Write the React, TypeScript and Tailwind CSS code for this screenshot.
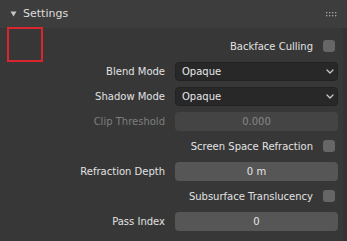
import React from "react";

// Blender-style "Settings" material panel
const FONT = { fontFamily: '"DejaVu Sans", "Liberation Sans", sans-serif' };

function Chevron() {
  return (
    <svg width="8" height="5" viewBox="0 0 8 5" className="shrink-0">
      <path d="M1 1l3 3 3-3" fill="none" stroke="#c8c8c8" strokeWidth="1.3" strokeLinecap="round" strokeLinejoin="round" />
    </svg>
  );
}

function Dropdown({ value }: { value: string }) {
  return (
    <div className="h-[19px] rounded-[4px] bg-[#282828] border border-[#222] flex items-center justify-between pl-[6px] pr-[3px] text-[#e6e6e6]">
      <span>{value}</span>
      <Chevron />
    </div>
  );
}

function NumField({ value, disabled }: { value: string; disabled?: boolean }) {
  return (
    <div
      className={`h-[19px] rounded-[4px] flex items-center justify-center ${
        disabled ? "bg-[#444444] text-[#868686]" : "bg-[#565656] text-[#e6e6e6]"
      }`}
    >
      {value}
    </div>
  );
}

function CheckRow({ label }: { label: string }) {
  return (
    <>
      <div />
      <div className="flex items-center justify-end gap-[10px] pr-[3px] text-[#e2e2e2]">
        <span>{label}</span>
        <span className="w-[12px] h-[12px] rounded-[3px] bg-[#666666]" />
      </div>
    </>
  );
}

function Label({ text, dim }: { text: string; dim?: boolean }) {
  return <div className={`text-right ${dim ? "text-[#7e7e7e]" : "text-[#e2e2e2]"}`}>{text}</div>;
}

export default function App() {
  return (
    <div className="w-[347px] h-[241px] bg-[#373737] overflow-hidden relative text-[10px]" style={FONT}>
      {/* header */}
      <div className="h-[28px] bg-[#3d3d3d] flex items-center pl-[10px] pr-[9px]">
        <svg width="7" height="6" viewBox="0 0 7 6" className="mr-[6px]">
          <path d="M0.5 0.5h6L3.5 5.5z" fill="#c4c4c4" />
        </svg>
        <span className="text-[11px] text-[#dedede]">Settings</span>
        <svg width="12" height="5" viewBox="0 0 12 5" className="ml-auto mt-[1px]">
          {[0, 3, 6, 9].map((x) =>
            [0, 3].map((y) => (
              <g key={`${x}-${y}`}>
                <rect x={x + 0.5} y={y + 0.5} width="1.5" height="1.5" fill="#1e1e1e" />
                <rect x={x} y={y} width="1.5" height="1.5" fill="#a0a0a0" />
              </g>
            ))
          )}
        </svg>
      </div>

      {/* rows */}
      <div className="grid grid-cols-[165px_163px] gap-x-[10px] gap-y-[5px] auto-rows-[20px] items-center pt-[8px]">
        <CheckRow label="Backface Culling" />
        <Label text="Blend Mode" />
        <Dropdown value="Opaque" />
        <Label text="Shadow Mode" />
        <Dropdown value="Opaque" />
        <Label text="Clip Threshold" dim />
        <NumField value="0.000" disabled />
        <CheckRow label="Screen Space Refraction" />
        <Label text="Refraction Depth" />
        <NumField value="0 m" />
        <CheckRow label="Subsurface Translucency" />
        <Label text="Pass Index" />
        <NumField value="0" />
      </div>

      {/* right edge strip */}
      <div className="absolute top-[28px] right-0 bottom-0 w-[4px] bg-[#333333]" />

      {/* annotation box */}
      <div className="absolute left-[7px] top-[27px] w-[36px] h-[35px] border-2 border-[#d9262e]" />
    </div>
  );
}
